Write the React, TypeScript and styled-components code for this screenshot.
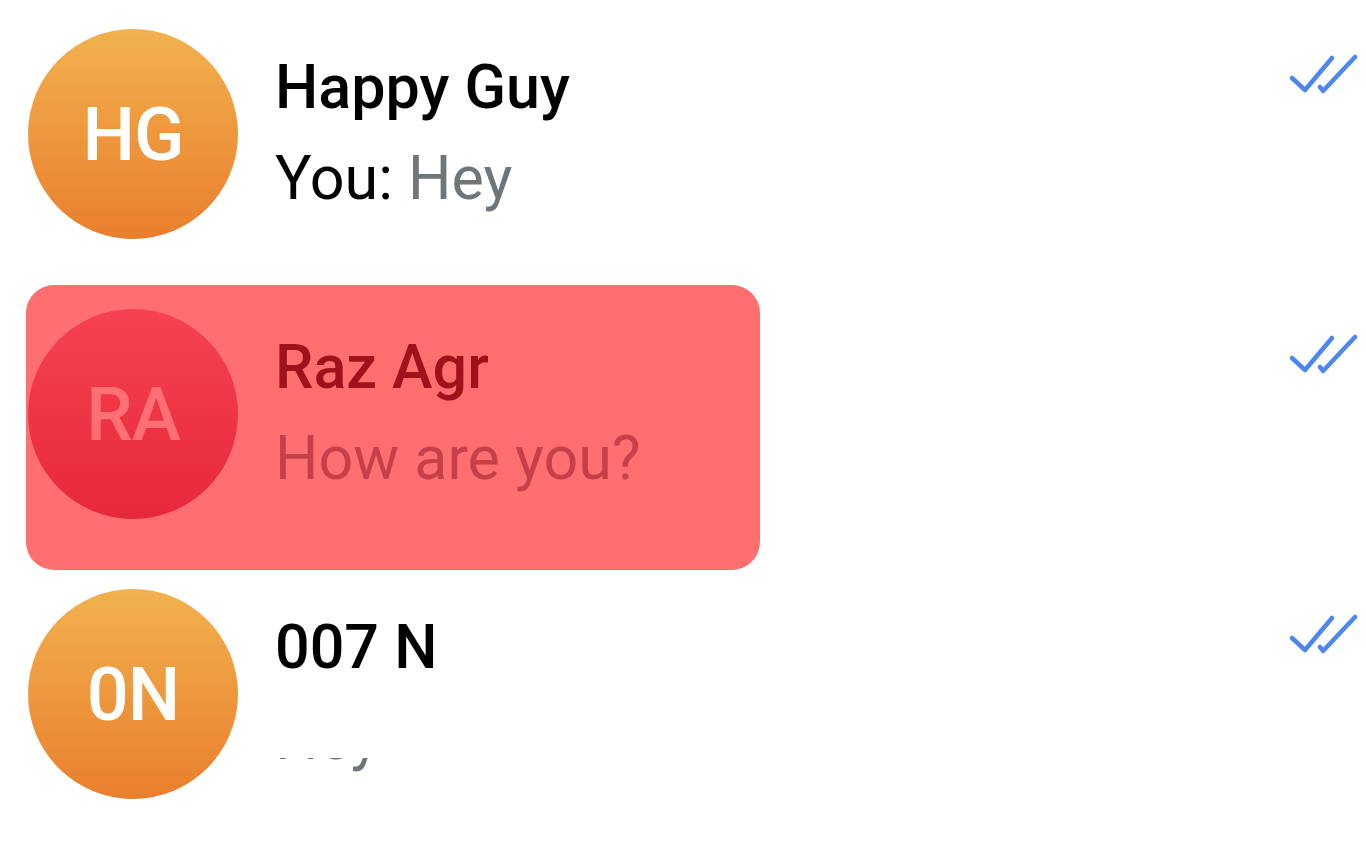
import React from 'react';
import styled, { createGlobalStyle, css } from 'styled-components';

const GlobalStyle = createGlobalStyle`
  html, body {
    margin: 0;
    padding: 0;
    background: #ffffff;
  }
  body {
    font-family: Roboto, 'Noto Sans', 'Liberation Sans', sans-serif;
    -webkit-font-smoothing: antialiased;
  }
`;

type Tone = 'orange' | 'red';

interface Chat {
  id: number;
  initials: string;
  name: string;
  sender?: string;
  preview: string;
  tone: Tone;
  selected?: boolean;
  hiding?: boolean;
}

const chats: Chat[] = [
  { id: 1, initials: 'HG', name: 'Happy Guy', sender: 'You', preview: 'Hey', tone: 'orange' },
  { id: 2, initials: 'RA', name: 'Raz Agr', preview: 'How are you?', tone: 'red', selected: true },
  { id: 3, initials: '0N', name: '007 N', preview: 'Hey', tone: 'orange', hiding: true },
];

const ReadCheck = () => (
  <svg width="70" height="42" viewBox="0 0 70 42" fill="none">
    <path d="M4 25 L17 37 L44 5" stroke="#4C86EE" strokeWidth="4.5" strokeLinecap="round" strokeLinejoin="round" />
    <path d="M32 34 L35 38 L67 4" stroke="#4C86EE" strokeWidth="4.5" strokeLinecap="round" strokeLinejoin="round" />
  </svg>
);

const App = () => {
  return (
    <>
      <GlobalStyle />
      <List>
        {chats.map((chat) => (
          <Row key={chat.id}>
            <Card $selected={chat.selected}>
              <Avatar $tone={chat.tone} $selected={chat.selected}>
                {chat.initials}
              </Avatar>
              <Body>
                <Name $selected={chat.selected}>{chat.name}</Name>
                <Preview $selected={chat.selected} $hiding={chat.hiding}>
                  {chat.sender && <Sender>{chat.sender}: </Sender>}
                  {chat.preview}
                </Preview>
              </Body>
            </Card>
            <Meta>
              <ReadCheck />
            </Meta>
          </Row>
        ))}
      </List>
    </>
  );
};

const List = styled.div`
  display: flex;
  flex-direction: column;
  padding: 5px 8px 0 26px;
  width: 1366px;
  box-sizing: border-box;
`;

const Row = styled.div`
  display: flex;
  height: 280px;
`;

const Card = styled.div<{ $selected?: boolean }>`
  display: flex;
  gap: 37px;
  width: 734px;
  height: 285px;
  flex-shrink: 0;
  box-sizing: border-box;
  padding: 24px 0 0 2px;
  border-radius: 28px;
  background: ${({ $selected }) => ($selected ? '#ff6f6f' : 'transparent')};
`;

const Avatar = styled.div<{ $tone: Tone; $selected?: boolean }>`
  width: 210px;
  height: 210px;
  border-radius: 50%;
  flex-shrink: 0;
  display: flex;
  align-items: center;
  justify-content: center;
  font-size: 74px;
  font-weight: 500;
  letter-spacing: -1px;
  color: ${({ $selected }) => ($selected ? '#ff7074' : '#ffffff')};
  background: ${({ $tone }) =>
    $tone === 'red'
      ? 'linear-gradient(180deg, #f6434f 0%, #e7283a 100%)'
      : 'linear-gradient(180deg, #f2b14f 0%, #ea7e2c 100%)'};
`;

const Body = styled.div`
  display: flex;
  flex-direction: column;
  padding-top: 13px;
  min-width: 0;
`;

const Name = styled.div<{ $selected?: boolean }>`
  font-size: 61px;
  line-height: 91px;
  font-weight: 500;
  white-space: nowrap;
  color: ${({ $selected }) => ($selected ? '#a0121a' : '#000000')};
`;

const Preview = styled.div<{ $selected?: boolean; $hiding?: boolean }>`
  font-size: 61px;
  line-height: 91px;
  font-weight: 400;
  white-space: nowrap;
  color: ${({ $selected }) => ($selected ? '#c6404a' : '#707579')};
  ${({ $hiding }) =>
    $hiding &&
    css`
      clip-path: inset(65px 0 0 0);
    `}
`;

const Sender = styled.span`
  color: #000000;
`;

const Meta = styled.div`
  margin-left: auto;
  padding-top: 48px;
`;

export default App;
